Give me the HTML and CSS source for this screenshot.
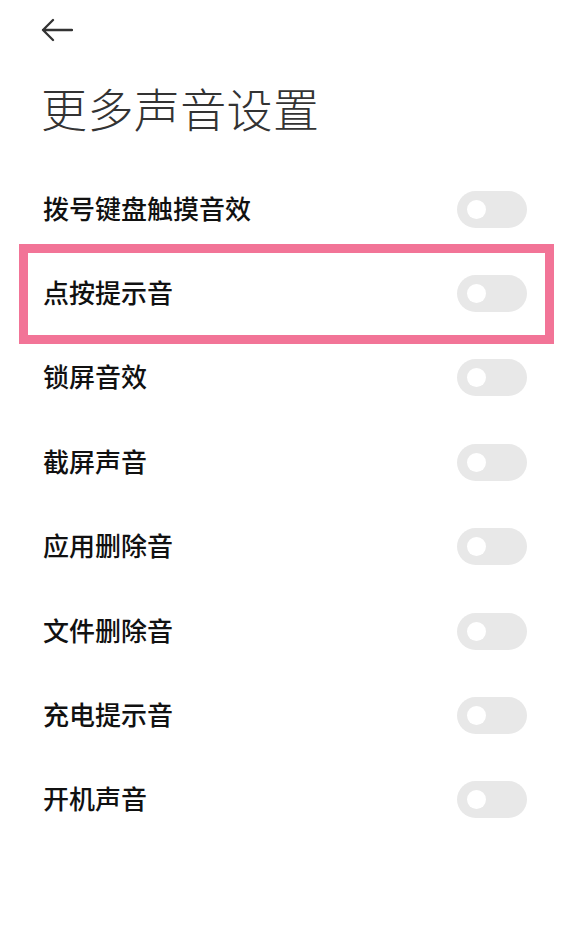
FILE: index.html
```html
<!DOCTYPE html>
<html lang="zh-CN">
<head>
<meta charset="utf-8">
<title>更多声音设置</title>
<link rel="stylesheet" href="styles.css">
</head>
<body>
<div class="page">
  <div class="topbar">
    <svg class="back" width="32" height="24" viewBox="0 0 32 24" aria-hidden="true">
      <path d="M31 12 H2 M12 2 L2 12 L12 22" fill="none" stroke="#333" stroke-width="2.3" stroke-linecap="round" stroke-linejoin="round"/>
    </svg>
  </div>
  <h1 class="title">更多声音设置</h1>
  <ul class="list">
    <li class="row"><span class="label">拨号键盘触摸音效</span><span class="toggle"><span class="knob"></span></span></li>
    <li class="row highlight"><span class="label">点按提示音</span><span class="toggle"><span class="knob"></span></span></li>
    <li class="row"><span class="label">锁屏音效</span><span class="toggle"><span class="knob"></span></span></li>
    <li class="row"><span class="label">截屏声音</span><span class="toggle"><span class="knob"></span></span></li>
    <li class="row"><span class="label">应用删除音</span><span class="toggle"><span class="knob"></span></span></li>
    <li class="row"><span class="label">文件删除音</span><span class="toggle"><span class="knob"></span></span></li>
    <li class="row"><span class="label">充电提示音</span><span class="toggle"><span class="knob"></span></span></li>
    <li class="row"><span class="label">开机声音</span><span class="toggle"><span class="knob"></span></span></li>
  </ul>
</div>
</body>
</html>
```

FILE: styles.css
```css
html, body {
  margin: 0;
  padding: 0;
  background: #ffffff;
}

body {
  font-family: "Noto Sans CJK SC", "Noto Sans", sans-serif;
  color: #111111;
}

.page {
  width: 570px;
  min-height: 940px;
}

.topbar {
  height: 60px;
  display: flex;
  align-items: center;
  padding-left: 41px;
}

.back {
  display: block;
}

.title {
  margin: 0 0 28px 0;
  padding: 15px 0 0 41px;
  font-size: 46px;
  line-height: 64px;
  font-weight: 300;
  color: #333333;
  letter-spacing: 0.4px;
}

.list {
  list-style: none;
  margin: 0;
  padding: 0;
}

.row {
  position: relative;
  height: 84.4px;
  display: flex;
  align-items: center;
  justify-content: space-between;
  padding: 0 43px 0 43px;
}

.label {
  font-size: 26px;
  line-height: 36px;
  margin-top: -3px;
  font-weight: 500;
  color: #111111;
}

.toggle {
  position: relative;
  width: 70px;
  height: 37px;
  border-radius: 18.5px;
  background: #e8e8e8;
  display: flex;
  align-items: center;
  padding-left: 10px;
  box-sizing: border-box;
}

.knob {
  width: 19px;
  height: 19px;
  border-radius: 50%;
  background: #ffffff;
}

.highlight::after {
  content: "";
  position: absolute;
  left: 19px;
  right: 16px;
  top: -7.5px;
  bottom: -8px;
  border: 9px solid #f27497;
  pointer-events: none;
}
```
